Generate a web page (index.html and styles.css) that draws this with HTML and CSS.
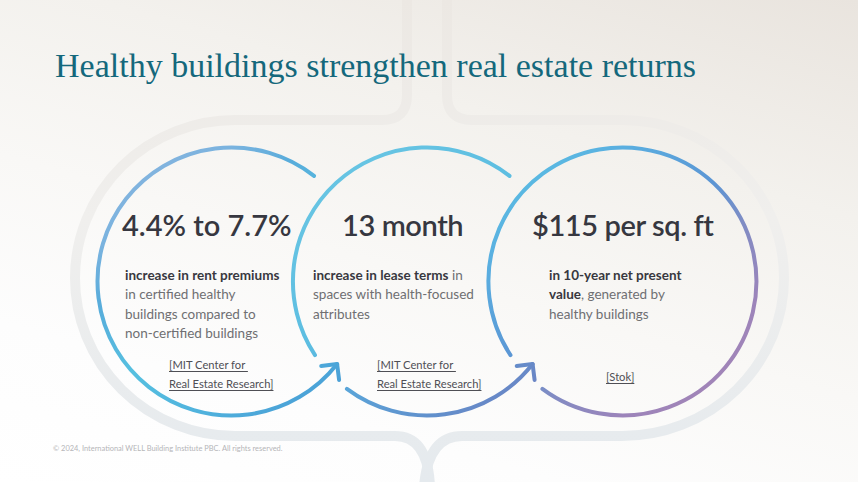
FILE: index.html
```html
<!DOCTYPE html>
<html lang="en">
<head>
<meta charset="utf-8">
<title>Healthy buildings strengthen real estate returns</title>
<link rel="stylesheet" href="styles.css">
</head>
<body>
<div class="slide">
  <svg class="decor" width="858" height="482" viewBox="0 0 858 482" aria-hidden="true">
    <defs>
      <linearGradient id="pipe" gradientUnits="userSpaceOnUse" x1="0" y1="0" x2="0" y2="482">
        <stop offset="0" stop-color="#ece8e3"/>
        <stop offset="0.45" stop-color="#f0efed"/>
        <stop offset="1" stop-color="#e5eaee"/>
      </linearGradient>
      <linearGradient id="g1" gradientUnits="userSpaceOnUse" x1="140" y1="160" x2="320" y2="400">
        <stop offset="0" stop-color="#86b4de"/>
        <stop offset="0.15" stop-color="#7ab3df"/>
        <stop offset="0.3" stop-color="#58acdb"/>
        <stop offset="0.55" stop-color="#56c0e0"/>
        <stop offset="0.8" stop-color="#50b2dd"/>
        <stop offset="1" stop-color="#4a9fd6"/>
      </linearGradient>
      <linearGradient id="g2" gradientUnits="userSpaceOnUse" x1="330" y1="170" x2="520" y2="400">
        <stop offset="0" stop-color="#68c5e3"/>
        <stop offset="0.42" stop-color="#5cbde1"/>
        <stop offset="0.6" stop-color="#5aa5d9"/>
        <stop offset="0.85" stop-color="#6190cc"/>
        <stop offset="1" stop-color="#6c84c4"/>
      </linearGradient>
      <linearGradient id="g3" gradientUnits="userSpaceOnUse" x1="500" y1="170" x2="720" y2="420">
        <stop offset="0" stop-color="#5ac0e3"/>
        <stop offset="0.2" stop-color="#5aaee0"/>
        <stop offset="0.45" stop-color="#5b95d4"/>
        <stop offset="0.6" stop-color="#7f8cc4"/>
        <stop offset="0.8" stop-color="#9c84ba"/>
        <stop offset="1" stop-color="#a585b6"/>
      </linearGradient>
    </defs>
    <g fill="none" stroke="url(#pipe)" stroke-width="10">
      <path d="M407 -5 V95 Q407 120 382 120 H235 A160 158 0 0 0 235 436 H395 Q428 436 430 487"/>
      <path d="M447 -5 V95 Q447 120 472 120 H622 A162 158 0 0 1 622 436 H462 Q428 436 424 487"/>
    </g>
    <g fill="none" stroke-width="4" stroke-linecap="round" stroke-linejoin="round">
      <path stroke="url(#g1)" d="M314 175.9 A134 134 0 1 0 337.1 364"/>
      <path stroke="url(#g1)" d="M321.2 366 L337.1 364 L339.1 379.9"/>
      <path stroke="url(#g2)" d="M315 355.1 A134 134 0 0 1 509.5 175.9"/>
      <path stroke="url(#g2)" d="M346.9 388.9 A134 134 0 0 0 532.6 364"/>
      <path stroke="url(#g2)" d="M516.7 366 L532.6 364 L534.6 379.9"/>
      <path stroke="url(#g3)" d="M510.5 355.1 A134 134 0 1 1 542.4 388.9"/>
    </g>
  </svg>

  <h1 class="title">Healthy buildings strengthen real estate returns</h1>

  <div class="stats">
    <div class="stat stat--one">
      <div class="stat__value">4.4% to 7.7%</div>
      <p class="stat__text"><b>increase in rent premiums</b><br>in certified healthy<br>buildings compared to<br>non-certified buildings</p>
      <p class="stat__cite"><u>[MIT Center for&nbsp;</u><br><u>Real Estate Research]</u></p>
    </div>
    <div class="stat stat--two">
      <div class="stat__value">13 month</div>
      <p class="stat__text"><b>increase in lease terms</b> in<br>spaces with health-focused<br>attributes</p>
      <p class="stat__cite"><u>[MIT Center for&nbsp;</u><br><u>Real Estate Research]</u></p>
    </div>
    <div class="stat stat--three">
      <div class="stat__value">$115 per sq. ft</div>
      <p class="stat__text"><b>in 10-year net present<br>value</b>, generated by<br>healthy buildings</p>
      <p class="stat__cite stat__cite--single"><u>[Stok]</u></p>
    </div>
  </div>

  <p class="footer">© 2024, International WELL Building Institute PBC. All rights reserved.</p>
</div>
</body>
</html>
```

FILE: styles.css
```css
* { box-sizing: border-box; }

html, body {
  margin: 0;
  padding: 0;
  background: #ffffff;
}

.slide {
  position: relative;
  width: 858px;
  height: 482px;
  overflow: hidden;
  background: linear-gradient(196deg, #e9e4de 0%, #f3f1ed 30%, #f9f8f6 55%, #fdfdfd 78%, #ffffff 100%);
  font-family: "Lato", "Liberation Sans", sans-serif;
}

.decor {
  position: absolute;
  left: 0;
  top: 0;
}

.title {
  position: relative;
  margin: 0;
  padding: 47px 0 0 55px;
  font-family: "Liberation Serif", "Times New Roman", serif;
  font-weight: 400;
  font-size: 34px;
  line-height: 38px;
  color: #14687c;
  white-space: nowrap;
}

.stats {
  position: relative;
  display: flex;
  margin-top: 123px;
  padding-left: 96px;
}

.stat {
  width: 196px;
  display: flex;
  flex-direction: column;
  white-space: nowrap;
}

.stat__value {
  height: 34px;
  font-size: 29px;
  line-height: 34px;
  font-weight: 600;
  color: #363740;
}

.stat--two .stat__value,
.stat--three .stat__value {
  letter-spacing: -0.4px;
}

.stat__text {
  margin: 24px 0 0;
  height: 78px;
  font-size: 13.5px;
  line-height: 19.4px;
  font-weight: 400;
  color: #6f6f72;
}

.stat__text b {
  font-weight: 700;
  color: #383840;
}

.stat__cite {
  margin: 11px 0 0;
  height: 38px;
  font-size: 11.2px;
  line-height: 19px;
  color: #4f4f55;
}

.stat__cite u {
  text-decoration-thickness: 1px;
  text-underline-offset: 2px;
}

.stat__cite--single {
  padding-top: 12px;
}

.stat--one .stat__value { margin-left: 26px; }
.stat--one .stat__text { margin-left: 29px; }
.stat--one .stat__cite { margin-left: 73px; }

.stat--two .stat__value { margin-left: 50px; }
.stat--two .stat__text { margin-left: 21px; }
.stat--two .stat__cite { margin-left: 85px; }

.stat--three .stat__value { margin-left: 44px; }
.stat--three .stat__text { margin-left: 61px; }
.stat--three .stat__cite { margin-left: 118px; }

.footer {
  position: relative;
  margin: 51px 0 0;
  padding-left: 53px;
  font-size: 7.45px;
  line-height: 10px;
  color: #b5b5b8;
  white-space: nowrap;
}
```
